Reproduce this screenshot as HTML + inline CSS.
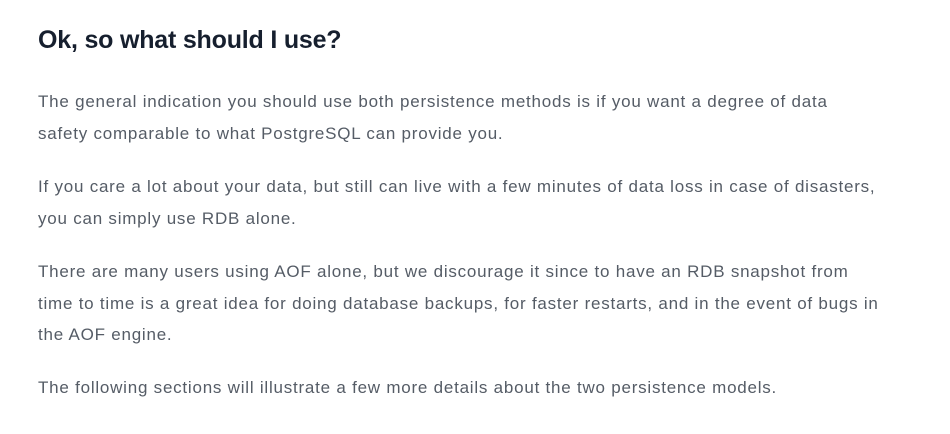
<!DOCTYPE html>
<html><head><style>
body{margin:0;background:#fff;width:950px;height:434px;overflow:hidden;font-family:"Liberation Sans",sans-serif}
.c{position:absolute;left:38px;top:0;width:900px}
h2{margin:0;position:absolute;top:26px;font-size:25px;font-weight:bold;color:#161f2e;letter-spacing:-0.2px;white-space:nowrap}
p{margin:0;position:absolute;left:0;font-size:17px;line-height:31.5px;color:#555c66;width:900px;letter-spacing:0.77px;white-space:nowrap}
</style></head><body><div class="c">
<h2>Ok, so what should I use?</h2>
<p style="top:86px">The general indication you should use both persistence methods is if you want a degree of data<br>safety comparable to what PostgreSQL can provide you.</p>
<p style="top:171px">If you care a lot about your data, but still can live with a few minutes of data loss in case of disasters,<br>you can simply use RDB alone.</p>
<p style="top:256px">There are many users using AOF alone, but we discourage it since to have an RDB snapshot from<br>time to time is a great idea for doing database backups, for faster restarts, and in the event of bugs in<br>the AOF engine.</p>
<p style="top:372px">The following sections will illustrate a few more details about the two persistence models.</p>
</div></body></html>
